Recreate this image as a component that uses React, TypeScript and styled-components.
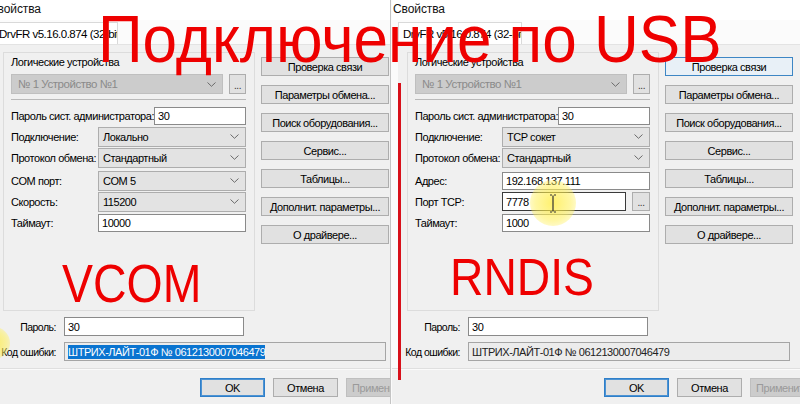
import React from "react";
import styled, { createGlobalStyle, css } from "styled-components";

const Global = createGlobalStyle`
  html, body { margin: 0; padding: 0; background: #fff; }
  body {
    width: 800px; height: 404px; overflow: hidden;
    font-family: "Liberation Sans", Arial, sans-serif;
  }
`;

const Stage = styled.div`
  position: relative;
  width: 800px;
  height: 404px;
  overflow: hidden;
  display: flex;
  background: #fbfbfb;
`;

const Frame = styled.div<{ $w: number; $edge?: boolean }>`
  position: relative;
  flex: none;
  width: ${(p) => p.$w}px;
  height: 404px;
  overflow: hidden;
  ${(p) => p.$edge && css`border-right: 1px solid #c4c4c4; margin-right: 1px;`}
`;

const Window = styled.div<{ $shift: number }>`
  width: 420px;
  height: 404px;
  margin-left: ${(p) => -p.$shift}px;
  display: flex;
  flex-direction: column;
  background: #f0f0f0;
  font-size: 11px;
  letter-spacing: -0.45px;
  color: #000;
`;

const TitleBar = styled.div`
  height: 20px;
  flex: none;
  background: #fff;
  font-size: 12px;
  letter-spacing: -0.1px;
  line-height: 18px;
  padding-left: 1px;
  color: #111;
`;

const Sheet = styled.div`
  display: flex;
  flex-direction: column;
  border-left: 6px solid #fbfbfb;
  padding-bottom: 7px;
`;

const TabRow = styled.div`
  height: 25px;
  background: #fbfbfb;
  display: flex;
  align-items: flex-end;
`;

const Tab = styled.div`
  box-sizing: border-box;
  width: 124px;
  height: 23px;
  background: #fff;
  border: 1px solid #d9d9d9;
  border-bottom: none;
  padding-left: 4px;
  line-height: 22px;
  white-space: nowrap;
  overflow: hidden;
  font-size: 11.5px;
  letter-spacing: -0.5px;
`;

const Page = styled.div`
  display: flex;
  padding: 7px 0 0 9px;
  border-top: 1px solid #e3e3e3;
  margin-top: -1px;
`;

const GroupBox = styled.div`
  box-sizing: border-box;
  width: 252px;
  height: 259px;
  border: 1px solid #dcdcdc;
  padding: 2px 8px 0 7px;
  display: flex;
  flex-direction: column;
`;

const GroupLabel = styled.div`
  line-height: 13px;
  margin-top: 1px;
`;

const DeviceRow = styled.div`
  display: flex;
  justify-content: space-between;
  margin-top: 5px;
`;

const Divider = styled.div`
  height: 1px;
  background: #b9b9b9;
  margin-top: 5px;
`;

const FieldList = styled.div`
  display: flex;
  flex-direction: column;
  margin-top: 5px;
`;

const FieldRow = styled.div<{ $gap?: number }>`
  height: 21px;
  display: flex;
  align-items: center;
  justify-content: space-between;
  margin-top: ${(p) => p.$gap ?? 0}px;
`;

const FieldGroup = styled.div`
  display: flex;
  gap: 6px;
`;

const Label = styled.span`
  white-space: nowrap;
`;

const Combo = styled.div<{ $w: number; $disabled?: boolean }>`
  box-sizing: border-box;
  width: ${(p) => p.$w}px;
  height: 20px;
  display: flex;
  align-items: center;
  justify-content: space-between;
  padding: 0 6px 0 4px;
  background: #e3e3e3;
  border: 1px solid #adadad;
  white-space: nowrap;
  ${(p) =>
    p.$disabled &&
    css`
      background: #cccccc;
      border-color: #bfbfbf;
      color: #8a8a8a;
      padding-left: 6px;
      font-size: 11.5px;
    `}
`;

const TextBox = styled.div<{ $w: number; $h?: number; $focus?: boolean; $readonly?: boolean }>`
  box-sizing: border-box;
  width: ${(p) => p.$w}px;
  height: ${(p) => p.$h ?? 18}px;
  display: flex;
  align-items: center;
  padding-left: 3px;
  background: #fff;
  border: 1px solid #8a8a8a;
  white-space: nowrap;
  overflow: hidden;
  ${(p) => p.$focus && css`border-color: #3a3a3a;`}
  ${(p) => p.$readonly && css`background: #ececec; border-color: #a5a5a5; color: #222;`}
`;

const Selected = styled.span`
  background: #0a74d0;
  color: #fff;
  padding: 1px 0;
`;

const DotsButton = styled.div<{ $w?: number; $h?: number }>`
  box-sizing: border-box;
  width: ${(p) => p.$w ?? 17}px;
  height: ${(p) => p.$h ?? 20}px;
  background: #e1e1e1;
  border: 1px solid #adadad;
  display: flex;
  align-items: flex-end;
  justify-content: center;
  padding-bottom: 3px;
  font-size: 10px;
  line-height: 8px;
  color: #333;
`;

const ButtonColumn = styled.div`
  display: flex;
  flex-direction: column;
  gap: 9px;
  margin-left: 6px;
  padding-top: 5px;
`;

const Btn = styled.div<{ $w?: number; $tone?: "normal" | "hover" | "default" | "disabled" }>`
  box-sizing: border-box;
  flex: none;
  width: ${(p) => p.$w ?? 128}px;
  height: 19px;
  display: flex;
  align-items: center;
  justify-content: center;
  background: #e1e1e1;
  border: 1px solid #adadad;
  white-space: nowrap;
  overflow: hidden;
  ${(p) =>
    p.$tone === "hover" &&
    css`
      background: #e8f0f7;
      border-color: #3d86c4;
    `}
  ${(p) =>
    p.$tone === "default" &&
    css`
      border-color: #2f7fc9;
      box-shadow: inset 0 0 0 1px #4d93d3;
    `}
  ${(p) =>
    p.$tone === "disabled" &&
    css`
      background: #cccccc;
      border-color: #bfbfbf;
      color: #9a9a9a;
    `}
`;

const BottomGrid = styled.div`
  display: grid;
  grid-template-columns: 62px auto;
  column-gap: 8px;
  row-gap: 6px;
  padding-top: 6px;
  align-items: center;
`;

const BottomLabel = styled.span`
  justify-self: end;
  white-space: nowrap;
  font-size: 10.5px;
  letter-spacing: -0.5px;
`;

const Separator = styled.div`
  height: 1px;
  background: #dfdfdf;
  border-bottom: 1px solid #fafafa;
`;

const Footer = styled.div`
  display: flex;
  gap: 8px;
  padding: 8px 0 0 212px;
`;

/* Overlays */
const Caption = styled.div<{ $x: number; $y: number; $size: number; $sx: number }>`
  position: absolute;
  left: ${(p) => p.$x}px;
  top: ${(p) => p.$y}px;
  font-family: "Liberation Sans", Arial, sans-serif;
  font-size: ${(p) => p.$size}px;
  line-height: ${(p) => p.$size}px;
  color: #ee0000;
  white-space: nowrap;
  transform: scaleX(${(p) => p.$sx});
  transform-origin: 0 0;
  pointer-events: none;
`;

const RedBar = styled.div`
  position: absolute;
  left: 398px;
  top: 83px;
  width: 3px;
  height: 297px;
  background: #d8101a;
`;

const Glow = styled.div<{ $x: number; $y: number; $r: number }>`
  position: absolute;
  left: ${(p) => p.$x - p.$r}px;
  top: ${(p) => p.$y - p.$r}px;
  width: ${(p) => p.$r * 2}px;
  height: ${(p) => p.$r * 2}px;
  border-radius: 50%;
  background: radial-gradient(circle, rgba(255, 236, 60, 0.75) 0%, rgba(255, 240, 90, 0.55) 55%, rgba(255, 245, 120, 0) 100%);
`;

const Cursor = styled.svg`
  position: absolute;
  left: 549px;
  top: 194px;
`;

const Chevron = () => (
  <svg width="9" height="5" viewBox="0 0 9 5">
    <path d="M0.5 0.5 L4.5 4.3 L8.5 0.5" fill="none" stroke="#6a6a6a" strokeWidth="1" />
  </svg>
);

type Field =
  | { kind: "text"; label: string; value: string; w: number; focus?: boolean; dots?: boolean; gap?: number }
  | { kind: "combo"; label: string; value: string; gap?: number };

const leftFields: Field[] = [
  { kind: "text", label: "Пароль сист. администратора:", value: "30", w: 92 },
  { kind: "combo", label: "Подключение:", value: "Локально" },
  { kind: "combo", label: "Протокол обмена:", value: "Стандартный" },
  { kind: "combo", label: "COM порт:", value: "COM 5", gap: 2 },
  { kind: "combo", label: "Скорость:", value: "115200" },
  { kind: "text", label: "Таймаут:", value: "10000", w: 148 },
];

const rightFields: Field[] = [
  { kind: "text", label: "Пароль сист. администратора:", value: "30", w: 92 },
  { kind: "combo", label: "Подключение:", value: "TCP сокет" },
  { kind: "combo", label: "Протокол обмена:", value: "Стандартный" },
  { kind: "text", label: "Адрес:", value: "192.168.137.111", w: 148, gap: 2 },
  { kind: "text", label: "Порт TCP:", value: "7778", w: 124, focus: true, dots: true },
  { kind: "text", label: "Таймаут:", value: "1000", w: 148 },
];

const sideButtons = [
  "Проверка связи",
  "Параметры обмена...",
  "Поиск оборудования...",
  "Сервис...",
  "Таблицы...",
  "Дополнит. параметры...",
  "О драйвере...",
];

function Dialog({
  shift,
  fields,
  selectedCode,
  hoverFirst,
}: {
  shift: number;
  fields: Field[];
  selectedCode: boolean;
  hoverFirst: boolean;
}) {
  const code = "ШТРИХ-ЛАЙТ-01Ф № 0612130007046479";
  return (
    <Window $shift={shift}>
      <TitleBar>Свойства</TitleBar>
      <Sheet>
        <TabRow>
          <Tab>DrvFR v5.16.0.874 (32-bit)</Tab>
        </TabRow>
        <Page>
          <GroupBox>
            <GroupLabel>Логические устройства</GroupLabel>
            <DeviceRow>
              <Combo $w={212} $disabled>
                <span>№ 1 Устройство №1</span>
                <Chevron />
              </Combo>
              <DotsButton>...</DotsButton>
            </DeviceRow>
            <Divider />
            <FieldList>
              {fields.map((f) => (
                <FieldRow key={f.label} $gap={f.gap}>
                  <Label>{f.label}</Label>
                  {f.kind === "combo" ? (
                    <Combo $w={148}>
                      <span>{f.value}</span>
                      <Chevron />
                    </Combo>
                  ) : f.dots ? (
                    <FieldGroup>
                      <TextBox $w={f.w} $h={19} $focus={f.focus}>
                        {f.value}
                      </TextBox>
                      <DotsButton $w={18} $h={19}>...</DotsButton>
                    </FieldGroup>
                  ) : (
                    <TextBox $w={f.w} $focus={f.focus}>
                      {f.value}
                    </TextBox>
                  )}
                </FieldRow>
              ))}
            </FieldList>
          </GroupBox>
          <ButtonColumn>
            {sideButtons.map((b, i) => (
              <Btn key={b} $tone={i === 0 && hoverFirst ? "hover" : "normal"}>
                {b}
              </Btn>
            ))}
          </ButtonColumn>
        </Page>
        <BottomGrid>
          <BottomLabel>Пароль:</BottomLabel>
          <TextBox $w={180} $h={19}>
            30
          </TextBox>
          <BottomLabel>Код ошибки:</BottomLabel>
          <TextBox $w={322} $h={19} $readonly>
            {selectedCode ? <Selected>{code}</Selected> : code}
          </TextBox>
        </BottomGrid>
      </Sheet>
      <Separator />
      <Footer>
        <Btn $w={65} $tone="default">
          OK
        </Btn>
        <Btn $w={65}>Отмена</Btn>
        <Btn $w={65} $tone="disabled">
          Применить
        </Btn>
      </Footer>
    </Window>
  );
}

export default function App() {
  return (
    <>
      <Global />
      <Stage>
        <Frame $w={390} $edge>
          <Dialog shift={12} fields={leftFields} selectedCode hoverFirst={false} />
          <Glow $x={-6} $y={343} $r={16} />
        </Frame>
        <Frame $w={408}>
          <Dialog shift={0} fields={rightFields} selectedCode={false} hoverFirst />
        </Frame>
        <Glow $x={553} $y={203} $r={23} />
        <Cursor width="8" height="19" viewBox="0 0 8 19">
          <path d="M1 1 H3 M5 1 H7 M4 1.5 V17.5 M1 18 H3 M5 18 H7" stroke="#333" strokeWidth="1.2" fill="none" />
        </Cursor>
        <RedBar />
        <Caption $x={98} $y={6} $size={66} $sx={0.94}>
          Подключение по USB
        </Caption>
        <Caption $x={62} $y={256} $size={54} $sx={0.86}>
          VCOM
        </Caption>
        <Caption $x={450} $y={251} $size={52} $sx={0.89}>
          RNDIS
        </Caption>
      </Stage>
    </>
  );
}
